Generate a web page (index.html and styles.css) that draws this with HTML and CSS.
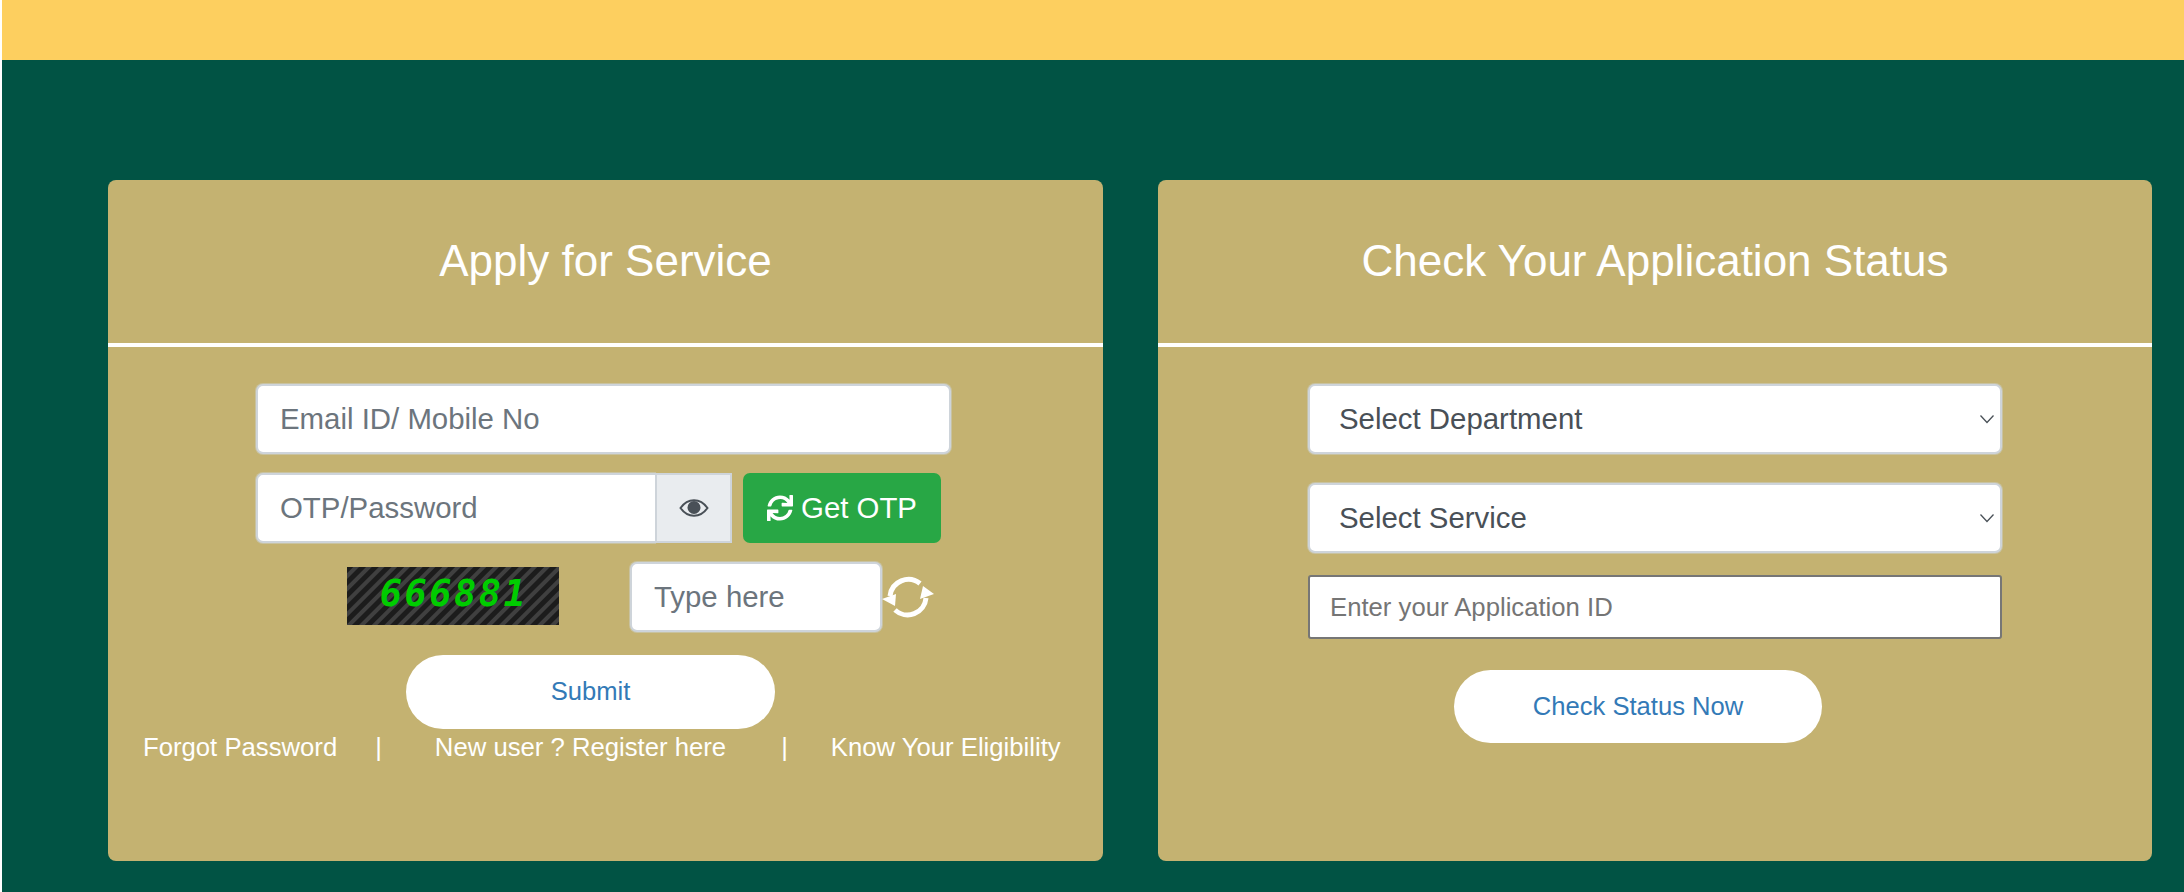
FILE: index.html
```html
<!DOCTYPE html>
<html lang="en">
<head>
<meta charset="utf-8">
<title>Apply for Service</title>
<link rel="stylesheet" href="styles.css">
</head>
<body>
<div class="page">
  <div class="topbar"></div>
  <main class="main">
    <section class="card">
      <h2 class="card-title">Apply for Service</h2>
      <form class="card-body left-body">
        <input class="field field-full" type="text" placeholder="Email ID/ Mobile No">
        <div class="otp-row">
          <div class="otp-group">
            <input class="field otp-input" type="text" placeholder="OTP/Password">
            <span class="addon">
              <svg class="eye" viewBox="0 0 30 20" aria-hidden="true"><path d="M1.5 10C5 5 9.5 2.2 15 2.2S25 5 28.5 10C25 15 20.500 17.800 15 17.800S5 15 1.500 10Z" fill="none" stroke="#495057" stroke-width="2"/><circle cx="15" cy="9.500" r="6.500" fill="#495057"/></svg>
            </span>
          </div>
          <button class="otp-btn" type="button">
            <svg class="sync" viewBox="0 0 512 512" aria-hidden="true"><path fill="#fff" d="M440.65 12.57l4 82.77A247.16 247.16 0 0 0 255.83 8C134.73 8 33.91 94.92 12.29 209.82A12 12 0 0 0 24.09 224h49.05a12 12 0 0 0 11.67-9.26 175.91 175.91 0 0 1 317-56.94l-101.46-4.86a12 12 0 0 0-12.57 12v47.41a12 12 0 0 0 12 12H500a12 12 0 0 0 12-12V12a12 12 0 0 0-12-12h-47.37a12 12 0 0 0-11.98 12.57zM255.83 432a175.61 175.61 0 0 1-146-77.8l101.8 4.87a12 12 0 0 0 12.57-12v-47.4a12 12 0 0 0-12-12H12a12 12 0 0 0-12 12V500a12 12 0 0 0 12 12h47.35a12 12 0 0 0 12-12.6l-4.15-82.57A247.17 247.17 0 0 0 255.83 504c121.11 0 221.93-86.92 243.55-201.82a12 12 0 0 0-11.8-14.18h-49.05a12 12 0 0 0-11.67 9.26A175.86 175.86 0 0 1 255.83 432z"/></svg>
            <span>Get OTP</span>
          </button>
        </div>
        <div class="captcha-row">
          <div class="captcha">666881</div>
          <input class="field captcha-input" type="text" placeholder="Type here">
          <svg class="reload" viewBox="0 0 52 42" aria-hidden="true">
            <path d="M8 20A18.500 18.500 0 0 1 38 7.500" fill="none" stroke="#fff" stroke-width="5"/>
            <path d="M44 22A18.500 18.500 0 0 1 13 34" fill="none" stroke="#fff" stroke-width="5"/>
            <path d="M0 23L14 18L13 30Z" fill="#fff"/>
            <path d="M52 18L41 10L38 23Z" fill="#fff"/>
          </svg>
        </div>
        <button class="pill pill-submit" type="button">Submit</button>
      </form>
      <nav class="links">
        <a class="link">Forgot Password</a>
        <span class="sep sep-one">|</span>
        <a class="link">New user ? Register here</a>
        <span class="sep sep-two">|</span>
        <a class="link">Know Your Eligibility</a>
      </nav>
    </section>
    <section class="card">
      <h2 class="card-title">Check Your Application Status</h2>
      <form class="card-body right-body">
        <div class="select-wrap">
          <select class="select"><option>Select Department</option></select>
          <svg class="chevron" viewBox="0 0 16 10" aria-hidden="true"><path d="M1.500 1.500L8 8.500L14.500 1.500" fill="none" stroke="#495057" stroke-width="1.300"/></svg>
        </div>
        <div class="select-wrap">
          <select class="select"><option>Select Service</option></select>
          <svg class="chevron" viewBox="0 0 16 10" aria-hidden="true"><path d="M1.500 1.500L8 8.500L14.500 1.500" fill="none" stroke="#495057" stroke-width="1.300"/></svg>
        </div>
        <input class="app-id" type="text" placeholder="Enter your Application ID">
        <button class="pill pill-status" type="button">Check Status Now</button>
      </form>
    </section>
  </main>
</div>
</body>
</html>
```
FILE: styles.css
```css
* { box-sizing: border-box; }
html, body { margin: 0; padding: 0; background: #fff; }
body { font-family: "Liberation Sans", Arial, sans-serif; }
.page { margin-left: 2px; height: 892px; overflow: hidden; }
.topbar { height: 60px; background: #fdcf5f; }
.main {
  height: 832px;
  background: #015344;
  padding: 120px 32px 0 106px;
  display: grid;
  grid-template-columns: 995px 994px;
  column-gap: 55px;
  align-items: start;
}
.card { height: 681px; background: #c4b271; border-radius: 8px; }
.card-title {
  margin: 0;
  height: 167px;
  border-bottom: 4px solid #fff;
  color: #fff;
  font-size: 44px;
  font-weight: 400;
  line-height: 162px;
  text-align: center;
}
.card-body { display: flex; flex-direction: column; padding-top: 37px; }
.left-body { padding-left: 148px; width: 843px; }
.right-body { padding-left: 150px; width: 844px; }

.field {
  height: 70px;
  border: 2px solid #ced4da;
  box-shadow: 0 0 0 1px rgba(206, 212, 218, .45);
  border-radius: 7px;
  background: #fff;
  padding: 0 22px;
  font: 400 29.400px "Liberation Sans", Arial, sans-serif;
  color: #495057;
  outline: none;
}
.field::placeholder { color: #6c757d; opacity: 1; }
.field-full { width: 695px; }
.otp-row { display: flex; gap: 11px; margin-top: 19px; }
.otp-group { display: flex; width: 476px; }
.otp-input { flex: 1; min-width: 0; border-right: 0; border-radius: 7px 0 0 7px; }
.addon {
  width: 77px;
  height: 70px;
  background: #e9ecef;
  border: 2px solid #ced4da;
  display: flex;
  align-items: center;
  justify-content: center;
}
.eye { width: 30px; height: 20px; }
.otp-btn {
  width: 198px;
  height: 70px;
  border: 0;
  border-radius: 7px;
  background: #28a745;
  color: #fff;
  font: 400 29.400px "Liberation Sans", Arial, sans-serif;
  display: flex;
  align-items: center;
  justify-content: center;
  gap: 8px;
  padding: 0;
}
.sync { width: 26px; height: 26px; }
.captcha-row { display: flex; align-items: center; margin-top: 19px; padding-left: 91px; }
.captcha {
  width: 212px;
  height: 58px;
  margin-bottom: 2px;
  padding-left: 2px;
  background: repeating-linear-gradient(135deg, #1c1c1c 0, #1c1c1c 4px, #404040 5px, #404040 8px, #1c1c1c 9px);
  color: #00cc00;
  font: italic 700 37px/53px "DejaVu Sans Mono", monospace;
  letter-spacing: 2.500px;
  text-align: center;
}
.captcha-input { width: 252px; margin-left: 71px; }
.reload { width: 52px; height: 42px; }
.pill {
  display: block;
  border: 0;
  border-radius: 37px;
  background: #fff;
  color: #337ab7;
  font: 400 25.600px "Liberation Sans", Arial, sans-serif;
  padding: 0 0 2px;
}
.pill-submit { width: 369px; height: 74px; margin: 23px 0 0 150px; }
.links {
  display: flex;
  align-items: center;
  height: 36px;
  padding-left: 35px;
  color: #fff;
  font-size: 25.700px;
}
.link { white-space: nowrap; }
.sep-one { margin-left: 38px; margin-right: 53px; }
.sep-two { margin-left: 55px; margin-right: 43px; }

.select-wrap { position: relative; width: 694px; height: 70px; margin-bottom: 29px; }
.select-wrap + .select-wrap { margin-bottom: 22px; }
.select {
  appearance: none;
  -webkit-appearance: none;
  width: 100%;
  height: 100%;
  border: 2px solid #ced4da;
  box-shadow: 0 0 0 1px rgba(206, 212, 218, .45);
  border-radius: 7px;
  background: #fff;
  padding: 0 29px 2px;
  font: 400 29.400px "Liberation Sans", Arial, sans-serif;
  color: #495057;
}
.chevron { position: absolute; right: 7px; top: 30px; width: 16px; height: 10px; }
.app-id {
  width: 694px;
  height: 64px;
  border: 2px solid #767676;
  border-radius: 3px;
  background: #fff;
  padding: 0 20px;
  font: 400 25.700px "Liberation Sans", Arial, sans-serif;
  outline: none;
}
.app-id::placeholder { color: #757575; opacity: 1; }
.pill-status { width: 368px; height: 73px; margin: 31px 0 0 146px; padding: 0; }
```
